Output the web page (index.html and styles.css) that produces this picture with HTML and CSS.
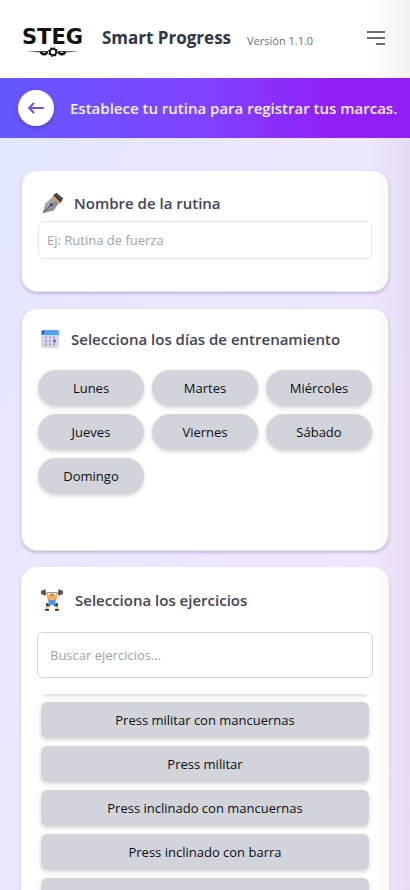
FILE: index.html
```html
<!DOCTYPE html>
<html lang="es">
<head>
<meta charset="utf-8">
<meta name="viewport" content="width=device-width, initial-scale=1">
<title>Smart Progress</title>
<link rel="stylesheet" href="styles.css">
</head>
<body>
<div class="app">
  <header class="topbar">
    <div class="logo">
      <span class="logo-name">STEG</span>
      <svg class="logo-mark" viewBox="0 0 62 10" aria-hidden="true">
        <path d="M4 4.500 26 4v1.600L20 5.600ZM58 4.500 36 4v1.600l6 0Z" fill="#2b3142"/>
        <path d="M18 5h8v1.500l-1 .3-.4 1.400-1.300-.2-1 1.100-1.200-1-1.400.3-.4-1.500-1.300-.4ZM44 5h-8v1.500l1 .3.4 1.400 1.300-.2 1 1.100 1.200-1 1.400.3.400-1.500 1.300-.4Z" fill="#111"/>
        <path d="M20.800 5h3v.7h-3ZM38.200 5h3v.7h-3Z" fill="#fff"/>
        <circle cx="31" cy="5" r="3.200" fill="#fff" stroke="#111" stroke-width="1.700"/>
        <circle cx="31" cy="5" r="4.300" fill="none" stroke="#111" stroke-width="1.200" stroke-dasharray="1.700 1.677"/>
      </svg>
    </div>
    <h1 class="brand">Smart Progress</h1>
    <span class="version">Versión 1.1.0</span>
    <button class="menu-button" type="button" aria-label="Menú">
      <svg width="18" height="14" viewBox="0 0 18 14" aria-hidden="true"><path d="M0 1h18M0 7h18M9 13h9" stroke="#6b6b76" stroke-width="2" fill="none"/></svg>
    </button>
  </header>

  <div class="banner">
    <button class="back-button" type="button" aria-label="Volver">
      <svg width="18" height="14" viewBox="0 0 18 14" aria-hidden="true"><path d="M16 7H2M6.500 2.500 2 7l4.500 4.500" fill="none" stroke="#6d4df2" stroke-width="2" stroke-linecap="round" stroke-linejoin="round"/></svg>
    </button>
    <p class="banner-text">Establece tu rutina para registrar tus marcas.</p>
  </div>

  <main class="content">
    <section class="card card-name">
      <h2 class="card-title title-name">
        <svg class="icon" viewBox="0 0 22 22" aria-hidden="true">
          <path d="M1 21 3.500 11.500 11 5l6 6-5.500 7.500Z" fill="#8b8d98"/>
          <path d="M1 21 3.500 11.500 11 5l3 3Z" fill="#a5a7b1"/>
          <path d="m1 21 8-8.500" stroke="#4b4458" stroke-width="1"/>
          <circle cx="9.500" cy="12.500" r="1.400" fill="#4b4458"/>
          <path d="m10 4.500 1.600-1.300 7.200 7.200-1.300 1.600Z" fill="#f59e3b"/>
          <path d="M11.300 3.300 14.500.8l6.700 5.700-2.700 4.200Z" fill="#383b4a"/>
          <path d="m14 2 6 6" stroke="#596071" stroke-width="1"/>
        </svg>
        <label for="routine">Nombre de la rutina</label>
      </h2>
      <input class="field" id="routine" type="text" placeholder="Ej: Rutina de fuerza">
    </section>

    <section class="card card-days">
      <h2 class="card-title title-days">
        <svg class="icon icon-small" viewBox="0 0 18 18" aria-hidden="true">
          <rect width="18" height="18" rx="2.500" fill="#ded5ec"/>
          <path d="M0 5V2Q0 0 2 0h14q2 0 2 2v3Z" fill="#58a0ee"/>
          <path d="M1 4V2.500Q1 1 2.500 1H4v1H3v2Z" fill="#5a35c8"/>
          <path d="M4 6.500h2v2H4zM8 6.500h2v2H8zM12 6.500h2v2h-2zM4 10h2v2H4zM8 10h2v2H8zM4 13.500h2v2H4zM8 13.500h2v2H8zM12 13.500h2v2h-2z" fill="#a7a3b2"/>
          <path d="M12 9.500h3v3h-3z" fill="#3d8eea"/>
        </svg>
        <span>Selecciona los días de entrenamiento</span>
      </h2>
      <div class="days">
        <button class="day" type="button">Lunes</button>
        <button class="day" type="button">Martes</button>
        <button class="day" type="button">Miércoles</button>
        <button class="day" type="button">Jueves</button>
        <button class="day" type="button">Viernes</button>
        <button class="day" type="button">Sábado</button>
        <button class="day" type="button">Domingo</button>
      </div>
    </section>

    <section class="card card-exercises">
      <h2 class="card-title">
        <svg class="icon" viewBox="0 0 22 22" aria-hidden="true">
          <path d="M3 3.500h16" stroke="#92969f" stroke-width="1"/>
          <path d="M0 2h1v3H0zM1.300 1h1.500v5H1.300zM3 .5h1.500v6H3zM17.500.5H19v6h-1.500zM19.200 1h1.500v5h-1.500zM21 2h1v3h-1z" fill="#343946"/>
          <path d="m6 4 2 7M16 4l-2 7" stroke="#f4a64c" stroke-width="2.200" stroke-linecap="round"/>
          <circle cx="11" cy="8" r="2.800" fill="#f4a64c"/>
          <path d="M8.500 7Q8.500 4.500 11 4.500t2.500 2.500l-2.500-1Z" fill="#b87532"/>
          <path d="M7.500 10q3.500 2 7 0v6h-7Z" fill="#4b96ee"/>
          <path d="M7.500 16h2l-1 1.200H5v-3h2.500ZM14.500 16h-2l1 1.200H17v-3h-2.500Z" fill="#343946"/>
          <path d="M6.500 17v3M15.500 17v3" stroke="#f4a64c" stroke-width="2"/>
          <path d="M4 20h4v1.700H4zM14 20h4v1.700h-4z" fill="#343946"/>
        </svg>
        <label for="search">Selecciona los ejercicios</label>
      </h2>
      <input class="field field-search" id="search" type="text" placeholder="Buscar ejercicios...">
      <div class="exercise-view">
        <div class="exercises">
          <button class="exercise" type="button" aria-label="Anterior"></button>
          <button class="exercise" type="button">Press militar con mancuernas</button>
          <button class="exercise" type="button">Press militar</button>
          <button class="exercise" type="button">Press inclinado con mancuernas</button>
          <button class="exercise" type="button">Press inclinado con barra</button>
          <button class="exercise" type="button" aria-label="Siguiente"></button>
        </div>
      </div>
    </section>
  </main>
  <div class="edge-shade"></div>
</div>
</body>
</html>
```
FILE: styles.css
```css
* {
  box-sizing: border-box;
}

body {
  margin: 0;
  font-family: "Open Sans", "Noto Sans", sans-serif;
  font-size: 13px;
  color: #0b0d12;
}

h1, h2, p {
  margin: 0;
}

button, input {
  font: inherit;
  color: inherit;
}

button {
  border: 0;
  padding: 0;
}

.app {
  position: relative;
  height: 100vh;
  overflow: hidden;
  display: flex;
  flex-direction: column;
  background: linear-gradient(to bottom right, #e0e7ff, #f0e6ff 60%, #f3e8ff);
}

.topbar {
  flex: none;
  display: flex;
  align-items: center;
  height: 78px;
  padding: 0 25px 2px 22px;
  background: #fff;
}

.logo {
  display: flex;
  flex-direction: column;
  gap: 2px;
  width: 64px;
  margin-right: 16px;
  padding-top: 10px;
}

.logo-name {
  font-family: "DejaVu Sans", sans-serif;
  font-weight: 700;
  font-size: 21px;
  line-height: 16px;
  color: #111;
}

.logo-mark {
  width: 62px;
  height: 10px;
}

.brand {
  font-size: 17px;
  font-weight: 700;
  line-height: 28px;
  color: #2d3748;
  white-space: nowrap;
}

.version {
  margin-left: 16px;
  padding-top: 4px;
  font-size: 11px;
  color: #6b7280;
  white-space: nowrap;
}

.menu-button {
  display: flex;
  margin-left: auto;
  background: none;
}

.banner {
  position: relative;
  z-index: 2;
  flex: none;
  display: flex;
  align-items: center;
  gap: 16px;
  height: 60px;
  padding: 0 18px;
  background: linear-gradient(to right, #6558ff, #8042ff 50%, #9220f5 80%, #911ff5);
}

.back-button {
  flex: none;
  display: flex;
  align-items: center;
  justify-content: center;
  width: 36px;
  height: 36px;
  border-radius: 50%;
  background: #fff;
  box-shadow: 0 3px 5px rgba(0, 0, 0, 0.15);
}

.banner-text {
  font-size: 15px;
  font-weight: 600;
  color: #f6f3ff;
  white-space: nowrap;
}

.content {
  flex: none;
  display: flex;
  flex-direction: column;
  gap: 16px;
  padding: 32px 21px 0;
}

.card {
  border-radius: 16px;
  background: #fff;
  box-shadow: 0 2px 3px rgba(70, 40, 100, 0.22);
}

.card-name,
.card-days {
  border: 1px solid #e5e4ee;
  padding: 16px;
}

.card-name {
  min-height: 122px;
}

.card-days {
  min-height: 243px;
}

.card-exercises {
  padding: 17px 16px 0;
}

.card-title {
  display: flex;
  align-items: center;
  gap: 12px;
  height: 32px;
  padding-left: 4px;
  font-size: 15px;
  font-weight: 600;
  color: #404655;
}

.title-name {
  gap: 10px;
  margin-bottom: 2px;
}

.title-days {
  height: 28px;
  padding-left: 3px;
}

.icon {
  flex: none;
  width: 22px;
  height: 22px;
}

.icon-small {
  width: 18px;
  height: 18px;
}

.field {
  display: block;
  width: 100%;
  height: 38px;
  padding: 0 8px;
  border: 1px solid #e5e7eb;
  border-radius: 6px;
  background: #fff;
}

.field::placeholder {
  color: #9ca3af;
  opacity: 1;
}

.field-search {
  height: 46px;
  margin-top: 16px;
  padding: 0 12px;
  border-color: #d1d5db;
}

.days {
  display: grid;
  grid-template-columns: repeat(3, 1fr);
  gap: 8px;
  margin-top: 17px;
}

.day,
.exercise {
  height: 36px;
  background: #d1d5db;
  box-shadow: 0 2px 4px rgba(0, 0, 0, 0.16);
}

.day {
  border-radius: 18px;
}

.exercise-view {
  margin-top: 16px;
  padding: 0 4px;
  overflow: hidden;
}

.exercises {
  display: flex;
  flex-direction: column;
  gap: 8px;
  margin-top: -36px;
}

.exercise {
  border-radius: 6px;
}

.edge-shade {
  position: absolute;
  z-index: 1;
  top: 0;
  right: 0;
  bottom: 0;
  width: 40px;
  pointer-events: none;
  background: linear-gradient(to right, transparent, rgba(60, 30, 50, 0.06));
}
```
